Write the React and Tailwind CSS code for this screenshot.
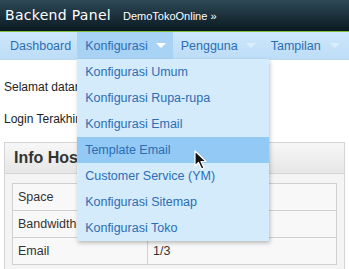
const menu = [
  "Konfigurasi Umum",
  "Konfigurasi Rupa-rupa",
  "Konfigurasi Email",
  "Template Email",
  "Customer Service (YM)",
  "Konfigurasi Sitemap",
  "Konfigurasi Toko",
];

const rows = [
  ["Space", ""],
  ["Bandwidth", ""],
  ["Email", "1/3"],
];

function Caret({ faint }) {
  return (
    <svg width="10" height="6" viewBox="0 0 10 6" className={faint ? "opacity-40" : ""}>
      <path d="M0 0 L10 0 L5 5 Z" fill="#ffffff" />
    </svg>
  );
}

function Cursor() {
  return (
    <svg width="14" height="21" viewBox="0 0 14 21" className="absolute left-[117px] top-[91px]">
      <path d="M1 1 L1 16 L4.5 12.5 L7.5 19 L10 18 L7 11.5 L12 11.5 Z" fill="#111" stroke="#fff" strokeWidth="1.2" strokeLinejoin="round" />
    </svg>
  );
}

export default function App() {
  return (
    <div className="w-[349px] h-[269px] overflow-hidden bg-white font-['Liberation_Sans',Arial,sans-serif] text-[12px] text-[#222]">
      <div className="h-[31px] flex items-center gap-[12px] px-[5px] bg-gradient-to-b from-[#2e4a59] to-[#0b1a21]">
        <span className="font-['DejaVu_Sans',sans-serif] text-[14px] text-white tracking-[0.3px]">Backend Panel</span>
        <span className="text-[11px] text-white mt-[2px]">DemoTokoOnline »</span>
      </div>
      <div className="h-[1px] bg-[#7fbf3a]" />
      <div className="h-[28px] flex bg-gradient-to-b from-[#cde7fb] to-[#bcdcf6] text-[#2c6db4] text-[12.5px]">
        <div className="pl-[10px] pr-[6px] flex items-center">Dashboard</div>
        <div className="relative flex items-center gap-[8px] pl-[8px] pr-[7px] bg-[#a9d3f4]">
          Konfigurasi <Caret />
          <div className="absolute left-0 top-[27px] w-[192px] bg-[#d4ebfc] shadow-[1px_2px_4px_rgba(0,0,0,0.25)] z-10">
            {menu.map((m, i) => (
              <div
                key={m}
                className={`h-[26px] flex items-center px-[8px] ${i === 3 ? "bg-[#92c9f5]" : ""}`}
              >
                {m}
              </div>
            ))}
            <Cursor />
          </div>
        </div>
        <div className="flex items-center gap-[8px] pl-[8px] pr-[7px]">
          Pengguna <Caret faint />
        </div>
        <div className="flex items-center gap-[9px] px-[8px]">
          Tampilan <Caret faint />
        </div>
      </div>

      <div className="px-[4px]">
        <div className="mt-[20px] leading-[15px]">Selamat datang di panel admin</div>
        <div className="mt-[17px] leading-[15px]">Login Terakhir: 12 Januari 2013 (127.0.0.1)</div>
        <div className="mt-[15px] border border-[#d4d4d4] bg-[#f4f4f4]">
          <div className="h-[31px] flex items-center px-[9px] border-b border-[#d4d4d4] bg-gradient-to-b from-[#f7f7f7] to-[#e6e6e6] text-[16px] font-bold text-[#333]">
            Info Hosting
          </div>
          <div className="px-[7px] pt-[9px] pb-[8px]">
            <table className="w-full border-collapse text-[12.5px]">
              <tbody>
                {rows.map(([k, v]) => (
                  <tr key={k} className="h-[27px]">
                    <td className="w-[135px] border border-[#d0d0d0] px-[5px] bg-[#f8f8f8] text-[#333]">{k}</td>
                    <td className="border border-[#d0d0d0] px-[5px] bg-[#f8f8f8] text-[#333]">{v}</td>
                  </tr>
                ))}
              </tbody>
            </table>
          </div>
        </div>
      </div>
    </div>
  );
}
